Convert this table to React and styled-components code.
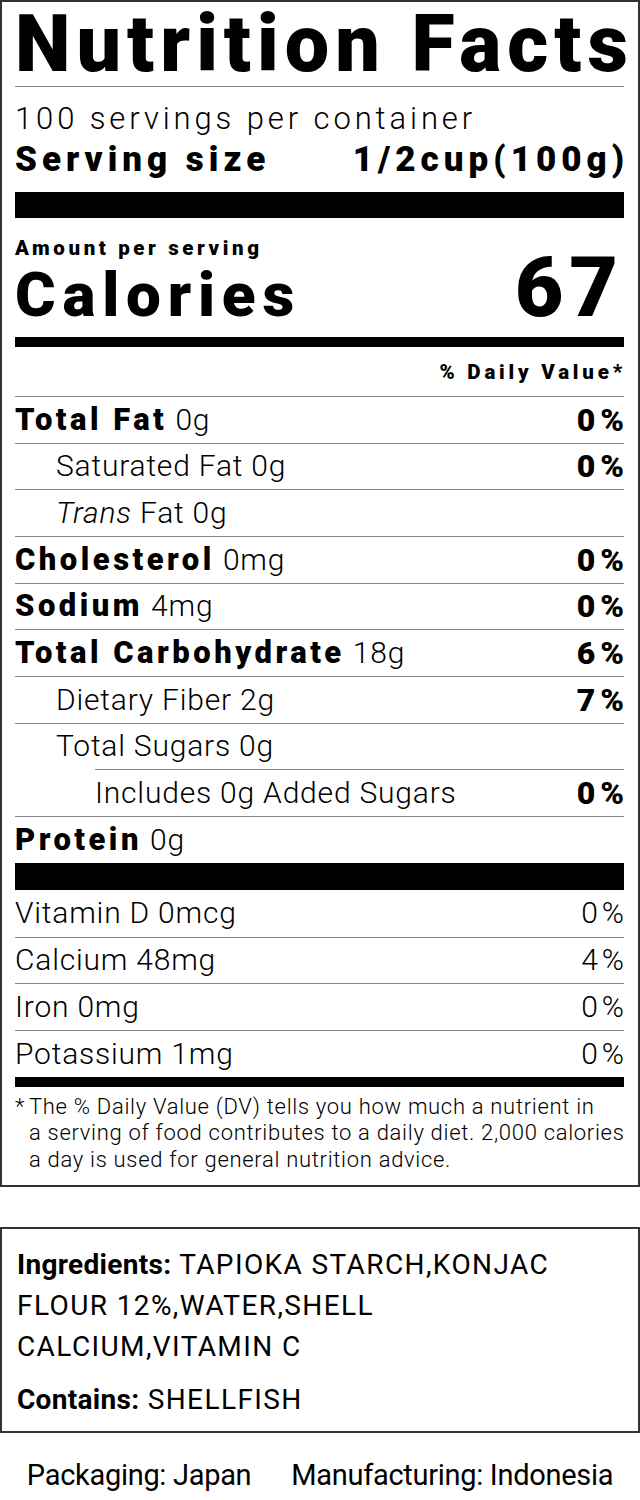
import React from 'react';
import styled, { createGlobalStyle } from 'styled-components';

const GlobalStyle = createGlobalStyle`
  html, body { margin: 0; padding: 0; background: #fff; }
  body { font-family: Roboto, "Liberation Sans", sans-serif; color: #000; }
`;

const Page = styled.div`
  width: 640px;
  display: flex;
  flex-direction: column;
`;

const Label = styled.section`
  box-sizing: border-box;
  width: 640px;
  border: 2px solid #333;
  padding: 0 14px 0 13px;
  display: flex;
  flex-direction: column;
`;

const Title = styled.h1`
  margin: 0;
  height: 84px;
  font-family: Roboto, sans-serif;
  font-weight: 900;
  font-size: 79px;
  line-height: 84px;
  letter-spacing: 6px;
  white-space: nowrap;
`;

const Rule = styled.div`
  height: 1px;
  background: #888;
`;

const Bar = styled.div`
  height: ${p => p.$h}px;
  background: #000;
`;

const ServingBlock = styled.div`
  padding: 12px 0;
  display: flex;
  flex-direction: column;
  gap: 1px;
`;

const ServingsPer = styled.div`
  font-weight: 300;
  font-size: 31px;
  line-height: 40px;
  letter-spacing: 3.9px;
  white-space: nowrap;
`;

const ServingSize = styled.div`
  display: flex;
  justify-content: space-between;
  font-weight: 900;
  font-size: 35px;
  line-height: 40px;
  letter-spacing: 5px;
  white-space: nowrap;
  & > span:last-child {
    margin-right: -5px;
  }
`;

const AmountBlock = styled.div`
  padding: 18px 0 12px;
  display: flex;
  flex-direction: column;
`;

const Amount = styled.div`
  font-weight: 900;
  font-size: 20.5px;
  line-height: 24px;
  letter-spacing: 3.6px;
  white-space: nowrap;
`;

const CaloriesRow = styled.div`
  display: flex;
  justify-content: space-between;
  align-items: baseline;
`;

const CaloriesLabel = styled.span`
  font-weight: 900;
  font-size: 62px;
  line-height: 60px;
  letter-spacing: 6.8px;
`;

const CaloriesValue = styled.span`
  font-weight: 900;
  font-size: 84px;
  line-height: 56px;
  letter-spacing: 6px;
`;

const DVHeader = styled.div`
  padding: 13px 0 12px;
  text-align: right;
  font-weight: 900;
  font-size: 20.5px;
  line-height: 24px;
  letter-spacing: 3.8px;
  margin-right: -2px;
  white-space: nowrap;
`;

const Row = styled.div`
  box-sizing: border-box;
  height: ${p => p.$h || 46.67}px;
  margin-left: ${p => p.$rule || 0}px;
  padding-left: ${p => p.$pad || 0}px;
  border-top: ${p => (p.$noBorder ? 'none' : '1px solid #888')};
  display: flex;
  align-items: center;
  justify-content: space-between;
  font-size: 30px;
  line-height: 36px;
  white-space: nowrap;
`;

const Name = styled.span`
  font-weight: 300;
  letter-spacing: 0.8px;
  & b {
    font-weight: 900;
    font-size: 31px;
    letter-spacing: 3.5px;
  }
  & i {
    font-style: italic;
  }
`;

const Pct = styled.span`
  font-weight: ${p => (p.$light ? 300 : 900)};
  font-size: ${p => (p.$light ? 30 : 32)}px;
  letter-spacing: ${p => (p.$light ? 4 : 5)}px;
  margin-right: ${p => (p.$light ? -4 : -5)}px;
`;

const Footnote = styled.p`
  margin: 0;
  padding: 7px 0 11px;
  display: flex;
  font-weight: 300;
  font-size: 22px;
  line-height: 26.67px;
  letter-spacing: 0.7px;
  white-space: nowrap;
  & > span:first-child {
    width: 14px;
    flex: none;
  }
`;

const IngredientsBox = styled.section`
  box-sizing: border-box;
  width: 640px;
  margin-top: 40px;
  border: 2px solid #333;
  padding: 15px 14px 11px 15px;
  display: flex;
  flex-direction: column;
  gap: 12px;
  font-family: Roboto, sans-serif;
`;

const IngText = styled.p`
  margin: 0;
  font-size: 28px;
  line-height: 41px;
  font-weight: 400;
  letter-spacing: 1.4px;
  white-space: nowrap;
  & b {
    font-weight: 700;
    letter-spacing: 0.3px;
  }
`;

const Footer = styled.div`
  padding-top: 24px;
  display: flex;
  justify-content: center;
  gap: 40px;
  font-family: Roboto, sans-serif;
  font-size: 29px;
  line-height: 36px;
  letter-spacing: -0.3px;
  white-space: nowrap;
`;

const nutrients = [
  { name: <><b>Total Fat</b> 0g</>, pct: '0%' },
  { name: <>Saturated Fat 0g</>, pct: '0%', pad: 41 },
  { name: <><i>Trans</i> Fat 0g</>, pad: 41 },
  { name: <><b>Cholesterol</b> 0mg</>, pct: '0%' },
  { name: <><b>Sodium</b> 4mg</>, pct: '0%' },
  { name: <><b>Total Carbohydrate</b> 18g</>, pct: '6%' },
  { name: <>Dietary Fiber 2g</>, pct: '7%', pad: 41 },
  { name: <>Total Sugars 0g</>, pad: 41 },
  { name: <>Includes 0g Added Sugars</>, pct: '0%', rule: 80 },
  { name: <><b>Protein</b> 0g</> },
];

const vitamins = [
  { name: 'Vitamin D 0mcg', pct: '0%' },
  { name: 'Calcium 48mg', pct: '4%' },
  { name: 'Iron 0mg', pct: '0%' },
  { name: 'Potassium 1mg', pct: '0%' },
];

export default function App() {
  return (
    <Page>
      <GlobalStyle />
      <Label>
        <Title>Nutrition Facts</Title>
        <Rule />
        <ServingBlock>
          <ServingsPer>100 servings per container</ServingsPer>
          <ServingSize>
            <span>Serving size</span>
            <span>1/2cup(100g)</span>
          </ServingSize>
        </ServingBlock>
        <Bar $h={26} />
        <AmountBlock>
          <Amount>Amount per serving</Amount>
          <CaloriesRow>
            <CaloriesLabel>Calories</CaloriesLabel>
            <CaloriesValue>67</CaloriesValue>
          </CaloriesRow>
        </AmountBlock>
        <Bar $h={10} />
        <DVHeader>% Daily Value*</DVHeader>
        {nutrients.map((n, i) => (
          <Row key={i} $rule={n.rule || 0} $pad={n.rule ? 0 : n.pad || 0}>
            <Name>{n.name}</Name>
            {n.pct && <Pct>{n.pct}</Pct>}
          </Row>
        ))}
        <Bar $h={27} />
        {vitamins.map((v, i) => (
          <Row key={v.name} $noBorder={i === 0} $h={i === 0 ? 47 : 46.67}>
            <Name>{v.name}</Name>
            <Pct $light>{v.pct}</Pct>
          </Row>
        ))}
        <Bar $h={10} />
        <Footnote>
          <span>*</span>
          <span>
            The % Daily Value (DV) tells you how much a nutrient in
            <br />
            a serving of food contributes to a daily diet. 2,000 calories
            <br />
            a day is used for general nutrition advice.
          </span>
        </Footnote>
      </Label>
      <IngredientsBox>
        <IngText>
          <b>Ingredients:</b> TAPIOKA STARCH,KONJAC
          <br />
          FLOUR 12%,WATER,SHELL
          <br />
          CALCIUM,VITAMIN C
        </IngText>
        <IngText>
          <b>Contains:</b> SHELLFISH
        </IngText>
      </IngredientsBox>
      <Footer>
        <span>Packaging: Japan</span>
        <span>Manufacturing: Indonesia</span>
      </Footer>
    </Page>
  );
}
